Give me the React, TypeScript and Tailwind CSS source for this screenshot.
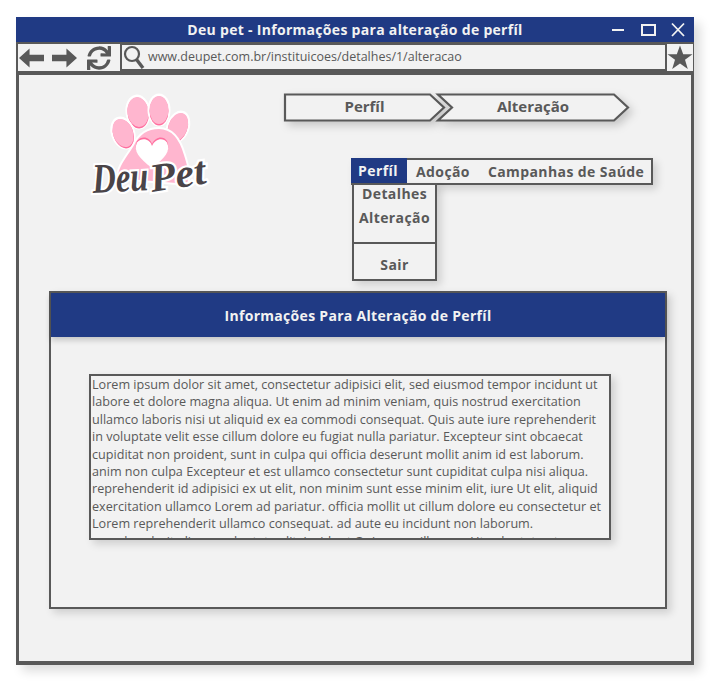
import { FaSync } from "react-icons/fa";

const loremLines = [
  "Lorem ipsum dolor sit amet, consectetur adipisici elit, sed eiusmod tempor incidunt ut",
  "labore et dolore magna aliqua. Ut enim ad minim veniam, quis nostrud exercitation",
  "ullamco laboris nisi ut aliquid ex ea commodi consequat. Quis aute iure reprehenderit",
  "in voluptate velit esse cillum dolore eu fugiat nulla pariatur. Excepteur sint obcaecat",
  "cupiditat non proident, sunt in culpa qui officia deserunt mollit anim id est laborum.",
  "anim non culpa Excepteur et est ullamco consectetur sunt cupiditat culpa nisi aliqua.",
  "reprehenderit id adipisici ex ut elit, non minim sunt esse minim elit, iure Ut elit, aliquid",
  "exercitation ullamco Lorem ad pariatur. officia mollit ut cillum dolore eu consectetur et",
  "Lorem reprehenderit ullamco consequat. ad aute eu incidunt non laborum.",
  "reprehenderit aliqua. voluptate elit, incidunt Quis esse cillum eu Ut voluptate ut",
];

const Arrow = ({ flip }: { flip?: boolean }) => (
  <svg width="25" height="20" viewBox="0 0 26 20" className={flip ? "-scale-x-100" : ""}>
    <path d="M0 10 L11 0 V6.5 H26 V13.5 H11 V20 Z" fill="#595959" />
  </svg>
);

const WindowControls = () => (
  <svg width="75" height="16" viewBox="0 0 75 16" fill="none" stroke="#f2f2f2" strokeWidth="2">
    <path d="M0 8 H12" />
    <rect x="30" y="3" width="13" height="10" />
    <path d="M60 1.5 L72 14 M72 1.5 L60 14" strokeWidth="1.8" />
  </svg>
);

const SearchGlyph = () => (
  <svg width="22" height="24" viewBox="0 0 22 24" fill="none" stroke="#595959">
    <circle cx="9" cy="9" r="7" strokeWidth="2.2" />
    <path d="M13.5 14.5 L20 23" strokeWidth="3.4" />
  </svg>
);

const StarGlyph = () => (
  <svg width="26" height="25" viewBox="0 0 26 25">
    <path d="M13 0.5 L16.2 9.2 H25.5 L18 14.8 L20.8 24 L13 18.4 L5.2 24 L8 14.8 L0.5 9.2 H9.8 Z" fill="#595959" />
  </svg>
);

const toes = [
  { cx: 48, cy: 17, rx: 10.5, ry: 15.5, rotate: -8 },
  { cx: 69, cy: 15, rx: 9.5, ry: 14.5, rotate: 0 },
  { cx: 88, cy: 32, rx: 9.5, ry: 15, rotate: 20 },
  { cx: 33, cy: 38, rx: 10, ry: 15, rotate: -20 },
];

const Logo = () => (
  <svg width="122" height="102" viewBox="0 0 122 102" className="overflow-visible">
    {toes.map((t) => (
      <g key={t.cx} transform={`rotate(${t.rotate} ${t.cx} ${t.cy})`}>
        <ellipse cx={t.cx} cy={t.cy} rx={t.rx + 2} ry={t.ry + 2} fill="#ffffff" />
        <ellipse cx={t.cx} cy={t.cy + 1} rx={t.rx} ry={t.ry} fill="#ff6f9f" />
        <ellipse cx={t.cx} cy={t.cy} rx={t.rx} ry={t.ry - 0.5} fill="#ffb6cf" />
      </g>
    ))}
    <path
      d="M27 84 C26 72 36 62 43 50 C48 40 56 33 69 33 C84 33 91 46 95 60 C98 70 101 78 98 90 Z"
      fill="#ffb6cf"
      stroke="#ffffff"
      strokeWidth="2"
    />
    <path d="M62 72 C49 62 43 55 47 46 C52 40 60 42 62 49 C65 42 73 40 77 46 C81 55 75 62 62 72 Z" fill="#ff6f9f" />
    <path d="M62 73 C49 63 43 56 47 47.5 C52 42 60 44 62 51 C65 44 73 42 77 47.5 C81 56 75 63 62 73 Z" fill="#ffffff" />
    <g
      fill="#4a4448"
      stroke="#ffffff"
      strokeWidth="4.5"
      paintOrder="stroke"
      fontFamily="'Liberation Serif', serif"
      fontStyle="italic"
      fontWeight="700"
    >
      <text x="3" y="98" fontSize="42" textLength="56" lengthAdjust="spacingAndGlyphs" transform="rotate(-3 3 98)">
        Deu
      </text>
      <text x="62" y="97" fontSize="40" textLength="56" lengthAdjust="spacingAndGlyphs" transform="rotate(-9 62 97)">
        Pet
      </text>
    </g>
  </svg>
);

const Crumb = ({ label, width, first }: { label: string; width: number; first?: boolean }) => {
  const right = width - 15;
  const notch = first ? "" : "L15 14.5 ";
  const points = `M1 1.5 H${right} L${width - 1} 14.5 L${right} 27.5 H1 ${notch}Z`;
  return (
    <div
      className={`relative flex h-[29px] items-center justify-center pb-[2px] text-[15px] font-bold text-[#595959] ${first ? "w-[161px]" : "-ml-[8px] w-[192px]"}`}
    >
      <svg width={width} height="29" className="absolute inset-0 overflow-visible drop-shadow-[4px_4px_4px_rgba(0,0,0,0.18)]">
        <path d={points} fill="#f2f2f2" stroke="#595959" strokeWidth="2.2" />
      </svg>
      <span className="relative">{label}</span>
    </div>
  );
};

export default function App() {
  return (
    <div
      className="h-[684px] w-[715px] bg-white pl-[16px] pt-[17px]"
      style={{ fontFamily: "'Open Sans', sans-serif" }}
    >
      <div className="flex h-[648px] w-[678px] flex-col bg-[#595959] shadow-[6px_6px_10px_rgba(0,0,0,0.14)]">
        <div className="relative flex h-[25px] shrink-0 items-center justify-center bg-[#203a84] text-[14px] font-bold tracking-[0.3px] text-[#f2f2f2]">
          <span>Deu pet - Informações para alteração de perfíl</span>
          <div className="absolute right-[7px] top-[5px]">
            <WindowControls />
          </div>
        </div>

        <div className="flex h-[33px] shrink-0 items-start gap-[2px] pl-[2px] pt-[2px]">
          <div className="flex h-[27px] w-[102px] items-center gap-[8px] bg-[#f2f2f2] pl-[1px]">
            <Arrow />
            <Arrow flip />
            <FaSync size={24} color="#595959" className="ml-[2px]" />
          </div>
          <div className="mt-[1px] flex h-[24px] w-[543px] items-center bg-[#f2f2f2] pl-[1px] text-[12.5px] text-[#595959]">
            <SearchGlyph />
            <span className="ml-[3px]">www.deupet.com.br/instituicoes/detalhes/1/alteracao</span>
          </div>
          <div className="flex h-[27px] w-[26px] items-center justify-center bg-[#f2f2f2]">
            <StarGlyph />
          </div>
        </div>

        <div className="mx-[3px] mb-[4px] flex-1 bg-[#f2f2f2]">
          <div className="flex h-[216px] pt-[18px]">
            <div className="ml-[71px] mt-[2px] w-[122px] shrink-0">
              <Logo />
            </div>
            <div className="ml-[72px] flex flex-col">
              <div className="flex">
                <Crumb label="Perfíl" width={161} first />
                <Crumb label="Alteração" width={192} />
              </div>
              <div className="relative ml-[67px] mt-[36px] flex h-[27px] w-[302px] items-center border-2 border-[#595959] text-[14px] font-bold tracking-[0.4px] text-[#595959] shadow-[4px_4px_8px_rgba(0,0,0,0.15)]">
                <span className="-my-[2px] -ml-[2px] flex h-[25px] w-[56px] items-center justify-center self-start bg-[#203a84] pr-[2px] text-[#f2f2f2]">Perfíl</span>
                <span className="ml-[9px]">Adoção</span>
                <span className="ml-[18px]">Campanhas de Saúde</span>
                <div className="absolute left-[-1px] top-[23px] w-[85px] border-2 border-[#595959] bg-[#f2f2f2] text-center leading-[18px] shadow-[4px_4px_8px_rgba(0,0,0,0.15)]">
                  <div className="flex h-[57px] flex-col gap-[6px]">
                    <span>Detalhes</span>
                    <span>Alteração</span>
                  </div>
                  <div className="flex h-[37px] items-end justify-center border-t-2 border-[#595959] pb-[5px]">Sair</div>
                </div>
              </div>
            </div>
          </div>

          <div className="ml-[30px] h-[318px] w-[618px] border-2 border-[#595959] shadow-[4px_4px_8px_rgba(0,0,0,0.15)]">
            <div className="flex h-[44px] items-center justify-center bg-[#203a84] text-[14px] font-bold tracking-[0.3px] text-[#f2f2f2] shadow-[0_3px_6px_rgba(0,0,0,0.2)]">
              Informações Para Alteração de Perfíl
            </div>
            <div className="ml-[38px] mt-[37px] h-[166px] w-[522px] overflow-hidden border-2 border-[#595959] pl-[1px] text-[12.62px] leading-[17.4px] text-[#595959] shadow-[4px_4px_8px_rgba(0,0,0,0.15)]">
              {loremLines.map((line) => (
                <div key={line} className="whitespace-nowrap">
                  {line}
                </div>
              ))}
            </div>
          </div>
        </div>
      </div>
    </div>
  );
}
